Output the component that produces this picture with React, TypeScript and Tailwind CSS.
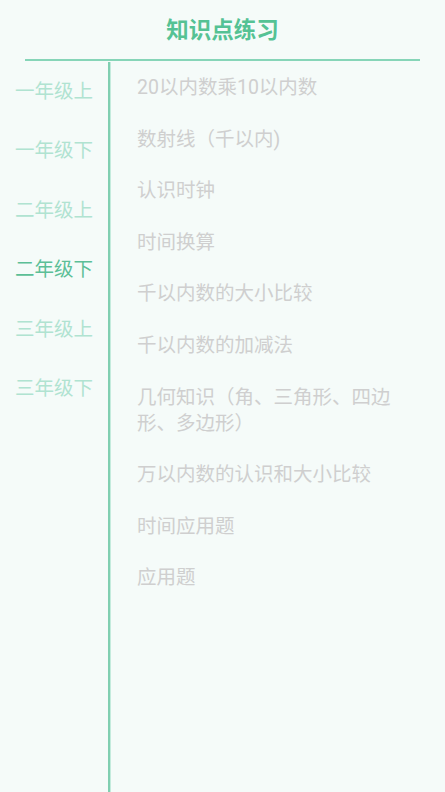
const grades = ['一年级上', '一年级下', '二年级上', '二年级下', '三年级上', '三年级下']
const activeGrade = 3

const topics = [
  '20以内数乘10以内数',
  '数射线（千以内)',
  '认识时钟',
  '时间换算',
  '千以内数的大小比较',
  '千以内数的加减法',
  '几何知识（角、三角形、四边形、多边形）',
  '万以内数的认识和大小比较',
  '时间应用题',
  '应用题',
]

export default function App() {
  return (
    <div
      className="flex h-[792px] w-full flex-col overflow-hidden bg-[#f5fbf9]"
      style={{ fontFamily: 'Roboto, "Noto Sans CJK SC", "Noto Sans", sans-serif' }}
    >
      {/* header */}
      <div className="flex h-[59px] shrink-0 items-center justify-center pt-[3px]">
        <h1 className="text-[22.5px] font-bold text-[#55c294]">知识点练习</h1>
      </div>
      <div className="mx-[25px] h-[2px] shrink-0 bg-[#86d5b8]" />

      <div className="flex min-h-0 flex-1">
        {/* grade list */}
        <div className="flex w-[108px] shrink-0 flex-col pt-[1px]">
          {grades.map((g, i) => (
            <div
              key={g}
              className={`flex h-[59.4px] items-center justify-center text-[19.5px] ${
                i === activeGrade ? 'text-[#5cbf97]' : 'text-[#b0e3d1]'
              }`}
            >
              {g}
            </div>
          ))}
        </div>

        {/* divider */}
        <div className="mt-[1px] flex shrink-0">
          <div className="w-[2px] bg-[#80cfb1]" />
          <div className="w-[1px] bg-[#c4ebdd]" />
        </div>

        {/* topic list */}
        <div className="flex flex-1 flex-col gap-[25.6px] pl-[26px] pr-[38px] pt-[14px]">
          {topics.map((t) => (
            <p key={t} className="text-[19.5px] leading-[26px] text-[#cfcfcf]">
              {t}
            </p>
          ))}
        </div>
      </div>
    </div>
  )
}
